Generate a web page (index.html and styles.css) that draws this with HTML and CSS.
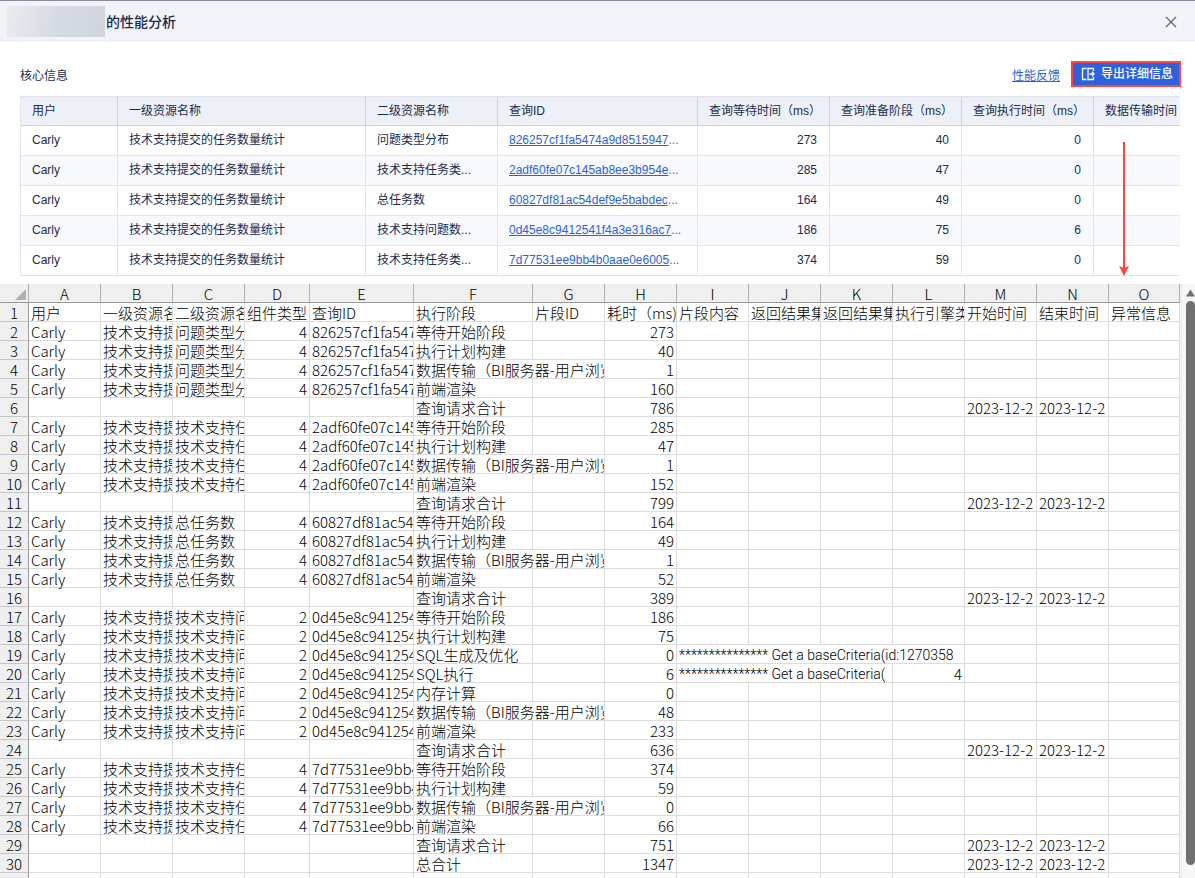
FILE: index.html
```
<!DOCTYPE html>
<html lang="zh-CN">
<head>
    <meta charset="UTF-8">
    <meta name="viewport" content="width=device-width, initial-scale=1.0">
    <link rel="stylesheet" href="styles.css">
    <title>性能分析</title>
</head>
<body>

    <header class="bar">
        <span class="mask"></span>
        <h1>的性能分析</h1>
        <button class="close" type="button" aria-label="关闭">
            <svg width="12" height="12" viewBox="0 0 12 12"><path d="M1 1l10 10M11 1L1 11" fill="none" stroke="#5a6680" stroke-width="1.3"/></svg>
        </button>
    </header>

    <section class="core">
        <div class="tools">
            <h2>核心信息</h2>
            <a class="feedback" href="#">性能反馈</a>
            <button class="export" type="button">
                <svg width="14" height="14" viewBox="0 0 14 14" fill="none" stroke="#fff" stroke-width="1.3"><path d="M5.500 1.500H1.500v11H5.500M7 0.500v13M7 1.500h5.500v2.500M7 12.500h5.500V10M8.500 7h4.500M11 4.800L13.200 7L11 9.200"/></svg>
                导出详细信息
            </button>
        </div>

        <div class="info">
            <table>
                <colgroup><col class="u"><col class="r1"><col class="r2"><col class="qid"><col class="ms"><col class="ms"><col class="ms"><col class="ms"></colgroup>
                <thead>
                    <tr><th>用户</th><th>一级资源名称</th><th>二级资源名称</th><th>查询ID</th><th>查询等待时间（ms）</th><th>查询准备阶段（ms）</th><th>查询执行时间（ms）</th><th>数据传输时间（ms）</th></tr>
                </thead>
                <tbody>
                    <tr><td>Carly</td><td>技术支持提交的任务数量统计</td><td>问题类型分布</td><td class="id"><a href="#">826257cf1fa5474a9d8515947</a>...</td><td class="n">273</td><td class="n">40</td><td class="n">0</td><td></td></tr>
                    <tr><td>Carly</td><td>技术支持提交的任务数量统计</td><td>技术支持任务类...</td><td class="id"><a href="#">2adf60fe07c145ab8ee3b954e</a>...</td><td class="n">285</td><td class="n">47</td><td class="n">0</td><td></td></tr>
                    <tr><td>Carly</td><td>技术支持提交的任务数量统计</td><td>总任务数</td><td class="id"><a href="#">60827df81ac54def9e5babdec</a>...</td><td class="n">164</td><td class="n">49</td><td class="n">0</td><td></td></tr>
                    <tr><td>Carly</td><td>技术支持提交的任务数量统计</td><td>技术支持问题数...</td><td class="id"><a href="#">0d45e8c9412541f4a3e316ac7</a>...</td><td class="n">186</td><td class="n">75</td><td class="n">6</td><td></td></tr>
                    <tr><td>Carly</td><td>技术支持提交的任务数量统计</td><td>技术支持任务类...</td><td class="id"><a href="#">7d77531ee9bb4b0aae0e6005</a>...</td><td class="n">374</td><td class="n">59</td><td class="n">0</td><td></td></tr>
                </tbody>
            </table>
        </div>

        <svg class="arrow" width="10" height="134" viewBox="0 0 10 134"><path d="M4 0h2v126H4z" fill="#f44"/><path d="M0 124l5 2l5-2l-5 10z" fill="#f44"/></svg>
    </section>

    <section class="sheet">
        <div class="grid">
            <table>
                <colgroup><col class="no"><col class="w72"><col class="w72"><col class="w72"><col class="w65"><col class="w104"><col class="w119"><col class="w72"><col class="w72"><col class="w72"><col class="w72"><col class="w72"><col class="w72"><col class="w72"><col class="w72"><col class="w71"></colgroup>
                <thead>
                    <tr><th class="corner"><svg width="11" height="11" viewBox="0 0 11 11"><path d="M11 0v11H0z" fill="#b0b0b0"/></svg></th><th>A</th><th>B</th><th>C</th><th>D</th><th>E</th><th>F</th><th>G</th><th>H</th><th>I</th><th>J</th><th>K</th><th>L</th><th>M</th><th>N</th><th>O</th></tr>
                </thead>
                <tbody>
                    <tr><th>1</th><td>用户</td><td>一级资源名</td><td>二级资源名</td><td>组件类型</td><td>查询ID</td><td>执行阶段</td><td>片段ID</td><td>耗时（ms)</td><td>片段内容</td><td>返回结果集</td><td>返回结果集</td><td>执行引擎类</td><td>开始时间</td><td>结束时间</td><td>异常信息</td></tr>
                    <tr><th>2</th><td>Carly</td><td>技术支持提</td><td>问题类型分</td><td class="n">4</td><td>826257cf1fa547</td><td>等待开始阶段</td><td></td><td class="n">273</td><td></td><td></td><td></td><td></td><td></td><td></td><td></td></tr>
                    <tr><th>3</th><td>Carly</td><td>技术支持提</td><td>问题类型分</td><td class="n">4</td><td>826257cf1fa547</td><td>执行计划构建</td><td></td><td class="n">40</td><td></td><td></td><td></td><td></td><td></td><td></td><td></td></tr>
                    <tr><th>4</th><td>Carly</td><td>技术支持提</td><td>问题类型分</td><td class="n">4</td><td>826257cf1fa547</td><td colspan="2">数据传输（BI服务器-用户浏览器）</td><td class="n">1</td><td></td><td></td><td></td><td></td><td></td><td></td><td></td></tr>
                    <tr><th>5</th><td>Carly</td><td>技术支持提</td><td>问题类型分</td><td class="n">4</td><td>826257cf1fa547</td><td>前端渲染</td><td></td><td class="n">160</td><td></td><td></td><td></td><td></td><td></td><td></td><td></td></tr>
                    <tr><th>6</th><td></td><td></td><td></td><td></td><td></td><td>查询请求合计</td><td></td><td class="n">786</td><td></td><td></td><td></td><td></td><td>2023-12-2</td><td>2023-12-2</td><td></td></tr>
                    <tr><th>7</th><td>Carly</td><td>技术支持提</td><td>技术支持任</td><td class="n">4</td><td>2adf60fe07c145</td><td>等待开始阶段</td><td></td><td class="n">285</td><td></td><td></td><td></td><td></td><td></td><td></td><td></td></tr>
                    <tr><th>8</th><td>Carly</td><td>技术支持提</td><td>技术支持任</td><td class="n">4</td><td>2adf60fe07c145</td><td>执行计划构建</td><td></td><td class="n">47</td><td></td><td></td><td></td><td></td><td></td><td></td><td></td></tr>
                    <tr><th>9</th><td>Carly</td><td>技术支持提</td><td>技术支持任</td><td class="n">4</td><td>2adf60fe07c145</td><td colspan="2">数据传输（BI服务器-用户浏览器）</td><td class="n">1</td><td></td><td></td><td></td><td></td><td></td><td></td><td></td></tr>
                    <tr><th>10</th><td>Carly</td><td>技术支持提</td><td>技术支持任</td><td class="n">4</td><td>2adf60fe07c145</td><td>前端渲染</td><td></td><td class="n">152</td><td></td><td></td><td></td><td></td><td></td><td></td><td></td></tr>
                    <tr><th>11</th><td></td><td></td><td></td><td></td><td></td><td>查询请求合计</td><td></td><td class="n">799</td><td></td><td></td><td></td><td></td><td>2023-12-2</td><td>2023-12-2</td><td></td></tr>
                    <tr><th>12</th><td>Carly</td><td>技术支持提</td><td>总任务数</td><td class="n">4</td><td>60827df81ac54</td><td>等待开始阶段</td><td></td><td class="n">164</td><td></td><td></td><td></td><td></td><td></td><td></td><td></td></tr>
                    <tr><th>13</th><td>Carly</td><td>技术支持提</td><td>总任务数</td><td class="n">4</td><td>60827df81ac54</td><td>执行计划构建</td><td></td><td class="n">49</td><td></td><td></td><td></td><td></td><td></td><td></td><td></td></tr>
                    <tr><th>14</th><td>Carly</td><td>技术支持提</td><td>总任务数</td><td class="n">4</td><td>60827df81ac54</td><td colspan="2">数据传输（BI服务器-用户浏览器）</td><td class="n">1</td><td></td><td></td><td></td><td></td><td></td><td></td><td></td></tr>
                    <tr><th>15</th><td>Carly</td><td>技术支持提</td><td>总任务数</td><td class="n">4</td><td>60827df81ac54</td><td>前端渲染</td><td></td><td class="n">52</td><td></td><td></td><td></td><td></td><td></td><td></td><td></td></tr>
                    <tr><th>16</th><td></td><td></td><td></td><td></td><td></td><td>查询请求合计</td><td></td><td class="n">389</td><td></td><td></td><td></td><td></td><td>2023-12-2</td><td>2023-12-2</td><td></td></tr>
                    <tr><th>17</th><td>Carly</td><td>技术支持提</td><td>技术支持问</td><td class="n">2</td><td>0d45e8c941254</td><td>等待开始阶段</td><td></td><td class="n">186</td><td></td><td></td><td></td><td></td><td></td><td></td><td></td></tr>
                    <tr><th>18</th><td>Carly</td><td>技术支持提</td><td>技术支持问</td><td class="n">2</td><td>0d45e8c941254</td><td>执行计划构建</td><td></td><td class="n">75</td><td></td><td></td><td></td><td></td><td></td><td></td><td></td></tr>
                    <tr><th>19</th><td>Carly</td><td>技术支持提</td><td>技术支持问</td><td class="n">2</td><td>0d45e8c941254</td><td>SQL生成及优化</td><td></td><td class="n">0</td><td class="log" colspan="4">*************** Get a baseCriteria(id:1270358</td><td></td><td></td><td></td></tr>
                    <tr><th>20</th><td>Carly</td><td>技术支持提</td><td>技术支持问</td><td class="n">2</td><td>0d45e8c941254</td><td>SQL执行</td><td></td><td class="n">6</td><td class="log" colspan="3">*************** Get a baseCriteria(</td><td class="n">4</td><td></td><td></td><td></td></tr>
                    <tr><th>21</th><td>Carly</td><td>技术支持提</td><td>技术支持问</td><td class="n">2</td><td>0d45e8c941254</td><td>内存计算</td><td></td><td class="n">0</td><td></td><td></td><td></td><td></td><td></td><td></td><td></td></tr>
                    <tr><th>22</th><td>Carly</td><td>技术支持提</td><td>技术支持问</td><td class="n">2</td><td>0d45e8c941254</td><td colspan="2">数据传输（BI服务器-用户浏览器）</td><td class="n">48</td><td></td><td></td><td></td><td></td><td></td><td></td><td></td></tr>
                    <tr><th>23</th><td>Carly</td><td>技术支持提</td><td>技术支持问</td><td class="n">2</td><td>0d45e8c941254</td><td>前端渲染</td><td></td><td class="n">233</td><td></td><td></td><td></td><td></td><td></td><td></td><td></td></tr>
                    <tr><th>24</th><td></td><td></td><td></td><td></td><td></td><td>查询请求合计</td><td></td><td class="n">636</td><td></td><td></td><td></td><td></td><td>2023-12-2</td><td>2023-12-2</td><td></td></tr>
                    <tr><th>25</th><td>Carly</td><td>技术支持提</td><td>技术支持任</td><td class="n">4</td><td>7d77531ee9bb4</td><td>等待开始阶段</td><td></td><td class="n">374</td><td></td><td></td><td></td><td></td><td></td><td></td><td></td></tr>
                    <tr><th>26</th><td>Carly</td><td>技术支持提</td><td>技术支持任</td><td class="n">4</td><td>7d77531ee9bb4</td><td>执行计划构建</td><td></td><td class="n">59</td><td></td><td></td><td></td><td></td><td></td><td></td><td></td></tr>
                    <tr><th>27</th><td>Carly</td><td>技术支持提</td><td>技术支持任</td><td class="n">4</td><td>7d77531ee9bb4</td><td colspan="2">数据传输（BI服务器-用户浏览器）</td><td class="n">0</td><td></td><td></td><td></td><td></td><td></td><td></td><td></td></tr>
                    <tr><th>28</th><td>Carly</td><td>技术支持提</td><td>技术支持任</td><td class="n">4</td><td>7d77531ee9bb4</td><td>前端渲染</td><td></td><td class="n">66</td><td></td><td></td><td></td><td></td><td></td><td></td><td></td></tr>
                    <tr><th>29</th><td></td><td></td><td></td><td></td><td></td><td>查询请求合计</td><td></td><td class="n">751</td><td></td><td></td><td></td><td></td><td>2023-12-2</td><td>2023-12-2</td><td></td></tr>
                    <tr><th>30</th><td></td><td></td><td></td><td></td><td></td><td>总合计</td><td></td><td class="n">1347</td><td></td><td></td><td></td><td></td><td>2023-12-2</td><td>2023-12-2</td><td></td></tr>
                    <tr><th></th><td></td><td></td><td></td><td></td><td></td><td></td><td></td><td></td><td></td><td></td><td></td><td></td><td></td><td></td><td></td></tr>
                </tbody>
            </table>
        </div>
        <div class="scroll">
            <svg width="9" height="8" viewBox="0 0 9 8"><path d="M4.500 0.500L9 7.500H0z" fill="#707070"/></svg>
            <div class="thumb"></div>
        </div>
    </section>

</body>
</html>
```
FILE: styles.css
```
*{box-sizing: border-box;}
body{margin: 0;height: 100vh;display: flex;flex-direction: column;overflow: hidden;background-color: #fff;color: #1a2b4e;font-family: "Liberation Sans","Noto Sans CJK SC",sans-serif;font-size: 12px;border-top: 1px solid #868b9d;}
table{table-layout: fixed;border-collapse: separate;border-spacing: 0;}
th,td{padding: 0;font-weight: normal;text-align: left;white-space: nowrap;overflow: hidden;}
a{color: #2d62dc;text-decoration: underline;}
button{border: 0;padding: 0;font-family: inherit;cursor: pointer;}

.bar{height: 41px;flex: none;display: flex;align-items: center;padding: 0 18px 0 7px;background-color: #f2f3f8;}
.mask{width: 98px;height: 31px;background: linear-gradient(100deg,#e9ebee,#d6dae2 50%,#d0d5dd);}
.bar h1{margin: 0 auto 0 1px;font-size: 14px;font-weight: 500;line-height: 20px;}
.close{display: flex;background: none;}

.core{position: relative;flex: none;padding: 19px 15px 8px 20px;}
.tools{height: 26px;display: flex;align-items: center;margin-bottom: 9px;margin-right: -1px;}
.tools h2{margin: 0 auto 0 0;font-size: 12px;font-weight: normal;}
.feedback{margin-right: 11px;}
.export{height: 26px;display: flex;align-items: center;gap: 6px;padding: 0 6px 0 8px;border: 2px solid #f44;background-color: #2d62dc;color: #fff;font-size: 12px;line-height: 20px;font-weight: 500;}

.info{overflow: hidden;border-left: 1px solid #e3e5ec;border-top: 1px solid #e3e5ec;}
.info table{width: 1205px;}
.info th,.info td{height: 30px;padding: 0 0 0 11px;border-right: 1px solid #e3e5ec;border-bottom: 1px solid #e3e5ec;line-height: 18px;}
.info td{padding-bottom: 1px;}
.info th{height: 29px;background-color: #edf0f6;border-color: #cdd1db;}
.info tbody tr:nth-child(even){background-color: #f7f9fe;}
.info .id{color: #2d62dc;}
.info .n{text-align: right;padding-right: 12px;}
.u{width: 97px;}
.r1{width: 248px;}
.r2,.ms{width: 132px;}
.qid{width: 200px;}
.arrow{position: absolute;right: 66px;top: 100px;}

.sheet{flex: 1;min-height: 0;display: flex;overflow: hidden;background-color: #f0f0f0;color: #000;font-family: "Noto Sans CJK SC",sans-serif;font-size: 15px;font-weight: 300;}
.grid{flex: 1;min-width: 0;overflow: hidden;}
.grid table{width: 1180px;background-color: #fff;}
.grid th,.grid td{height: 19px;padding: 2px 2px 0;border-right: 1px solid #dcdcdc;border-bottom: 1px solid #dcdcdc;line-height: 16px;font-weight: 300;overflow-x: clip;overflow-y: visible;}
.grid th{background-color: #efefef;text-align: center;}
.grid thead th{border-right-color: #b0b0b0;border-bottom-color: #999;}
.grid tbody th{border-right-color: #999;border-bottom-color: #c6c6c6;padding: 2px 0 0;}
.grid td.n{text-align: right;}
.grid td.log{font-family: Roboto,sans-serif;font-size: 14px;}
.corner svg{display: block;margin-left: auto;}
.no{width: 29px;}
.w65{width: 65px;}
.w71{width: 71px;}
.w72{width: 72px;}
.w104{width: 104px;}
.w119{width: 119px;}

.scroll{width: 13px;flex: none;display: flex;flex-direction: column;align-items: flex-end;padding: 5px 0 13px;background-color: #f6f6f6;border-radius: 6px 0 0 0;overflow: hidden;margin-left: 2px;}
.thumb{flex: 1;width: 9px;margin-top: 4px;background-color: #707070;border-radius: 5px;}
```
